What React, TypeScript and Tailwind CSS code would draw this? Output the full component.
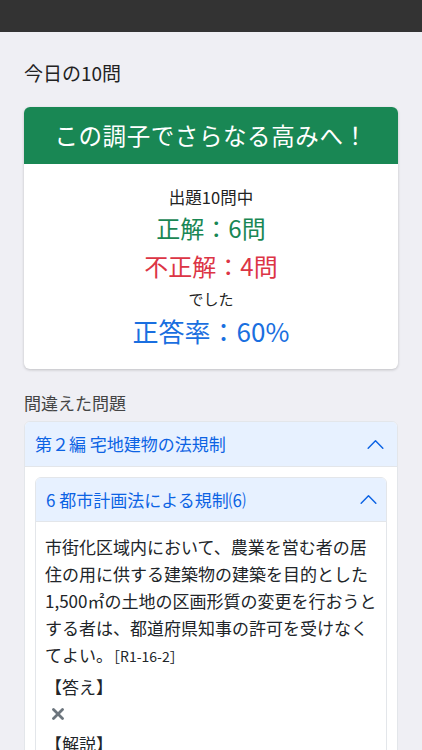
import React from 'react';

const jp = { fontFamily: '"Noto Sans CJK JP", "Noto Sans", sans-serif' };

function ChevronUp({ className }: { className?: string }) {
  return (
    <svg viewBox="0 0 20 12" className={className} fill="none" stroke="currentColor" strokeWidth="1.6" strokeLinecap="round" strokeLinejoin="round">
      <polyline points="2,10 10,2 18,10" />
    </svg>
  );
}

function Cross({ className }: { className?: string }) {
  return (
    <svg viewBox="0 0 12 12" className={className} fill="none" stroke="currentColor" strokeWidth="2.8" strokeLinecap="round">
      <line x1="1.5" y1="1.5" x2="10.5" y2="10.5" />
      <line x1="10.5" y1="1.5" x2="1.5" y2="10.5" />
    </svg>
  );
}

export default function App() {
  return (
    <div className="min-h-screen bg-[#efeff4] text-[#212529]" style={jp}>
      <div className="h-8 bg-[#333333]"></div>

      <div className="px-6">
        <h1 className="mt-[27px] text-[19px] leading-7 text-[#222]">今日の10問</h1>

        {/* result card */}
        <div className="mt-[20px] rounded-md overflow-hidden bg-white shadow-[0_1px_3px_rgba(0,0,0,0.2)]">
          <div className="h-[57px] bg-[#198754] text-white flex items-center justify-center text-[23.5px] tracking-wide">
            この調子でさらなる高みへ！
          </div>
          <div className="flex flex-col items-center pt-[21px] pb-[18px]">
            <p className="text-[16.5px] leading-6 text-[#222]">出題10問中</p>
            <p className="text-[24px] leading-[38px] text-[#198754]">正解：6問</p>
            <p className="text-[24px] leading-[38px] text-[#dc3545]">不正解：4問</p>
            <p className="mt-0.5 text-[15px] leading-6 text-[#222]">でした</p>
            <p className="text-[26px] leading-[40px] text-[#1a6fe0]">正答率：60%</p>
          </div>
        </div>

        <h2 className="mt-[22px] text-[17px] leading-6 text-[#444]">間違えた問題</h2>

        {/* accordion */}
        <div className="mt-[6px] rounded-md border border-[#e3e6ea] overflow-hidden bg-white">
          <div className="h-[45px] bg-[#e7f1ff] flex items-center justify-between pl-[10px] pr-[12px] border-b border-[#e3e6ea]">
            <span className="text-[17px] text-[#0c63e4]">第２編 宅地建物の法規制</span>
            <ChevronUp className="w-[19px] h-[11px] text-[#0c63e4]" />
          </div>
          <div className="p-[10px]">
            <div className="rounded-md border border-[#e3e6ea] overflow-hidden">
              <div className="h-[44px] bg-[#e7f1ff] flex items-center justify-between pl-[10px] pr-[8px] border-b border-[#e3e6ea]">
                <span className="text-[17px] text-[#0c63e4]">6 都市計画法による規制⑹</span>
                <ChevronUp className="w-[19px] h-[11px] text-[#0c63e4]" />
              </div>
              <div className="px-[9px] pt-[11px] pb-4 text-[17px] leading-[27px]">
                <p>
                  市街化区域内において、農業を営む者の居<br />
                  住の用に供する建築物の建築を目的とした<br />
                  1,500㎡の土地の区画形質の変更を行おうと<br />
                  する者は、都道府県知事の許可を受けなく<br />
                  てよい。<span className="text-[14px]">［R1-16-2］</span>
                </p>
                <p className="mt-[3px] leading-[28px]">【答え】</p>
                <div className="h-[26px] pl-[7px] flex items-center text-[#6c757d]">
                  <Cross className="w-[12px] h-[12px]" />
                </div>
                <p className="mt-[3px] leading-[28px]">【解説】</p>
              </div>
            </div>
          </div>
        </div>
      </div>
    </div>
  );
}
